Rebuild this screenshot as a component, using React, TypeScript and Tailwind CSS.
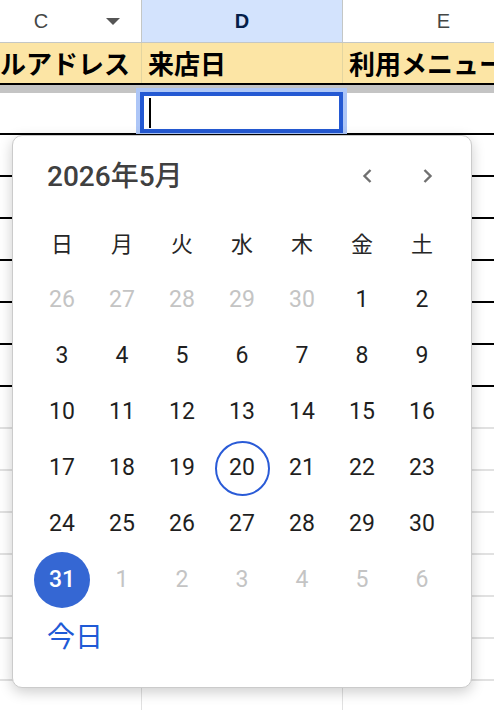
import React from "react";

const font = "font-['Roboto','Noto_Sans_CJK_JP',sans-serif]";
const letterFont = "font-['Liberation_Sans','Arial',sans-serif]";

type Day = { n: number; muted?: boolean };

const days: Day[] = [
  ...[26, 27, 28, 29, 30].map((n) => ({ n, muted: true })),
  ...Array.from({ length: 31 }, (_, i) => ({ n: i + 1 })),
  ...[1, 2, 3, 4, 5, 6].map((n) => ({ n, muted: true })),
];

const weekdays = ["日", "月", "火", "水", "木", "金", "土"];

const bodyRows = Array.from({ length: 14 }, (_, i) => (i < 6 ? "border-black" : "border-[#e1e1e1]"));

function Chevron({ dir }: { dir: "left" | "right" }) {
  return (
    <svg width="10" height="14" viewBox="0 0 10 14" fill="none">
      <path
        d={dir === "left" ? "M8.5 1 L2.5 7 L8.5 13" : "M1.5 1 L7.5 7 L1.5 13"}
        stroke="#707070"
        strokeWidth="2.4"
      />
    </svg>
  );
}

function DatePicker() {
  return (
    <div className="absolute left-[12px] top-[135px] h-[553px] w-[460px] rounded-[10px] border border-[#cbcbcb] bg-white shadow-[0_4px_14px_rgba(0,0,0,0.2)]">
      {/* month header */}
      <div className="flex h-[80px] items-start pl-[34px] pr-[23px]">
        <div className="pt-[25px] text-[28px] leading-[32px] font-medium text-[#404040]">2026年5月</div>
        <div className="ml-auto mt-[20px] flex gap-[21px]">
          <button className="flex h-[40px] w-[40px] items-center justify-center">
            <Chevron dir="left" />
          </button>
          <button className="flex h-[40px] w-[40px] items-center justify-center">
            <Chevron dir="right" />
          </button>
        </div>
      </div>

      {/* calendar grid */}
      <div className="px-[19px]">
        <div className="grid grid-cols-7">
          {weekdays.map((w) => (
            <div key={w} className="flex h-[56px] items-center justify-center text-[22px] text-[#262626]">
              {w}
            </div>
          ))}
        </div>
        <div className="grid grid-cols-7">
          {days.map((d, i) => {
            const today = !d.muted && d.n === 20;
            const selected = !d.muted && d.n === 31;
            return (
              <div key={i} className="flex h-[56px] items-center justify-center">
                {selected ? (
                  <span className="flex h-[56px] w-[56px] items-center justify-center rounded-full bg-[#3567d3] text-[23px] font-medium text-white">
                    {d.n}
                  </span>
                ) : today ? (
                  <span className="flex h-[55px] w-[55px] items-center justify-center rounded-full border-2 border-[#2a5bd7] text-[23px] text-[#1f1f1f]">
                    {d.n}
                  </span>
                ) : (
                  <span className={d.muted ? "text-[23px] text-[#c4c4c4]" : "text-[23px] text-[#1f1f1f]"}>{d.n}</span>
                )}
              </div>
            );
          })}
        </div>
      </div>

      <div className="mt-[14px] pl-[34px] text-[28px] leading-[32px] text-[#1f5ad6]">今日</div>
    </div>
  );
}

export default function App() {
  return (
    <div className={`relative h-[710px] w-[494px] overflow-hidden bg-white ${font}`}>
      <div className="ml-[-59px] w-[760px]">
        {/* column letters */}
        <div className={`flex h-[43px] border-b border-[#c4c7c5] text-[20px] ${letterFont}`}>
          <div className="relative flex w-[201px] items-center justify-center border-r border-[#c4c7c5] text-[#444746]">
            C
            <span className="absolute right-[21px] top-[18px] h-0 w-0 border-x-[7px] border-t-[7px] border-x-transparent border-t-[#555555]" />
          </div>
          <div className="flex w-[201px] items-center justify-center border-r border-[#c4c7c5] bg-[#d3e3fd] font-bold text-[#041e49]">
            D
          </div>
          <div className="flex w-[201px] items-center justify-center text-[#444746]">E</div>
        </div>

        {/* header row */}
        <div className="flex h-[42px] border-b-2 border-black bg-[#fce5a5] text-[26px] font-bold text-black">
          <div className="flex w-[201px] items-center overflow-hidden whitespace-nowrap border-r border-[#e3d5a0] pl-[7px] pt-[4px]">
            メールアドレス
          </div>
          <div className="flex w-[201px] items-center overflow-hidden whitespace-nowrap border-r border-[#e3d5a0] pl-[6px] pt-[4px]">
            来店日
          </div>
          <div className="flex flex-1 items-center overflow-hidden whitespace-nowrap pl-[6px] pt-[4px]">利用メニュー</div>
        </div>
        <div className="h-[8px] bg-[#c4c4c4]" />

        {/* editing row */}
        <div className="flex h-[42px] border-b-2 border-black">
          <div className="w-[201px] border-r border-[#e1e1e1]" />
          <div className="relative w-[201px] border-r border-[#e1e1e1]">
            <div className="absolute bottom-[-1px] left-[-6px] right-[-5px] top-[-5px] border-[4px] border-b-[1px] border-[#adc6f7]">
              <div className="flex h-full items-center border-[4px] border-[#2459d3] bg-white">
                <span className="ml-[5px] h-[30px] w-[2px] bg-black" />
              </div>
            </div>
          </div>
          <div className="flex-1" />
        </div>

        {bodyRows.map((b, i) => (
          <div key={i} className={`flex h-[42px] border-b-2 ${b}`}>
            <div className="w-[201px] border-r border-[#e1e1e1]" />
            <div className="w-[201px] border-r border-[#e1e1e1]" />
            <div className="flex-1" />
          </div>
        ))}
      </div>

      <DatePicker />
    </div>
  );
}
